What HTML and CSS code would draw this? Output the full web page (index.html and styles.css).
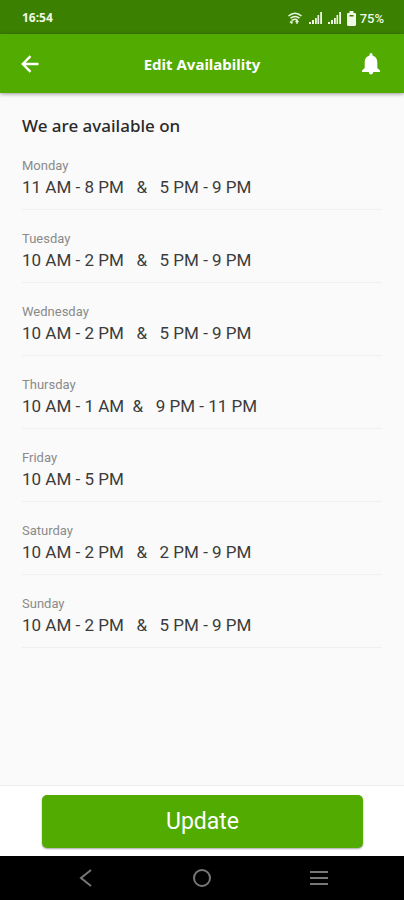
FILE: index.html
```
<!DOCTYPE html>
<html lang="en">
<head>
<meta charset="utf-8">
<meta name="viewport" content="width=device-width, initial-scale=1">
<title>Edit Availability</title>
<link rel="stylesheet" href="styles.css">
</head>
<body>
<div class="status">
  <span class="clock">16:54</span>
  <div class="indicators">
    <svg class="wifi" width="14" height="13" viewBox="0 0 14 13" fill="none" stroke="currentColor" stroke-width="1.500">
      <path d="M.5 4Q7-1.500 13.500 4M2.500 6.200Q7 2.800 11.500 6.200M4.500 8.300Q7 6.300 9.500 8.300"/>
      <path d="M4 7.500v4M2 9.500L4 11.500M9 12V8.500M7.500 10L9 8.500L10.500 10" stroke-width="1.200"/>
    </svg>
    <svg width="13" height="13" viewBox="0 0 13 13" fill="currentColor"><path d="M0 10h2v2H0zM3 8h2v4H3zM6 6h1.800v6H6zM8.500 3h1.600v9H8.500zM11.200 0h1.800v12h-1.800z"/></svg>
    <svg width="13" height="13" viewBox="0 0 13 13" fill="currentColor"><path d="M0 10h2v2H0zM3 8h2v4H3zM6 6h1.800v6H6zM8.500 3h1.600v9H8.500zM11.200 0h1.800v12h-1.800z"/></svg>
    <svg width="9" height="15" viewBox="0 0 9 15"><path fill="currentColor" d="M2.500 0h4v2H8q1 0 1 1v10.500q0 1.500-1.500 1.500h-6Q0 15 0 13.500V3q0-1 1-1h1.500z"/><path fill="#3b8000" d="M2.500 4h4v1.500h-4z"/></svg>
    <span class="percent">75%</span>
  </div>
</div>
<header class="appbar">
  <button class="icon-button" type="button" aria-label="Back">
    <svg width="18" height="18" viewBox="0 0 18 18" fill="none" stroke="currentColor" stroke-width="2.400"><path d="M17.500 9H2M9.500 1.200L1.800 9l7.700 7.800"/></svg>
  </button>
  <h1>Edit Availability</h1>
  <button class="icon-button" type="button" aria-label="Notifications">
    <svg width="18" height="22" viewBox="0 0 18 22" fill="currentColor"><path d="M9 0Q10.500 0 10.500 1.500V2.500C13.500 3.300 15.300 5.800 15.300 9v6l2.700 2.500V19H0v-1.500L2.700 15V9C2.700 5.800 4.500 3.300 7.500 2.500V1.500Q7.500 0 9 0zM6.700 19h4.600Q10.800 21.500 9 21.500T6.700 19z"/></svg>
  </button>
</header>
<main>
  <h2>We are available on</h2>
  <dl>
    <div class="day"><dt>Monday</dt><dd>11 AM - 8 PM   &amp;   5 PM - 9 PM</dd></div>
    <div class="day"><dt>Tuesday</dt><dd>10 AM - 2 PM   &amp;   5 PM - 9 PM</dd></div>
    <div class="day"><dt>Wednesday</dt><dd>10 AM - 2 PM   &amp;   5 PM - 9 PM</dd></div>
    <div class="day"><dt>Thursday</dt><dd>10 AM - 1 AM  &amp;   9 PM - 11 PM</dd></div>
    <div class="day"><dt>Friday</dt><dd>10 AM - 5 PM</dd></div>
    <div class="day"><dt>Saturday</dt><dd>10 AM - 2 PM   &amp;   2 PM - 9 PM</dd></div>
    <div class="day"><dt>Sunday</dt><dd>10 AM - 2 PM   &amp;   5 PM - 9 PM</dd></div>
  </dl>
</main>
<footer class="actions"><button class="update" type="button">Update</button></footer>
<nav class="system">
  <button type="button" aria-label="System back"><svg width="20" height="20" viewBox="0 0 20 20"><path d="M15 2L5 10l10 8"/></svg></button>
  <button type="button" aria-label="Home"><svg width="20" height="20" viewBox="0 0 20 20"><circle cx="10" cy="10" r="8"/></svg></button>
  <button type="button" aria-label="Recent apps"><svg width="20" height="20" viewBox="0 0 20 20"><path d="M1 4h18M1 10h18M1 16h18"/></svg></button>
</nav>
</body>
</html>
```
FILE: styles.css
```
* { box-sizing: border-box; }
body {
  margin: 0;
  min-height: 100vh;
  display: flex;
  flex-direction: column;
  background: #fafafa;
  color: #3c3c3c;
  font-family: Roboto, sans-serif;
}
button {
  border: 0;
  padding: 0;
  background: none;
  color: inherit;
  font: inherit;
}
svg { display: block; }
h1, h2, dl, dd { margin: 0; }
.status {
  height: 34px;
  padding: 2px 20px 0 22px;
  display: flex;
  align-items: center;
  justify-content: space-between;
  background: #3b8000;
  color: #eef8e4;
}
.clock {
  font: 700 12px/16px "Noto Sans", sans-serif;
}
.indicators {
  display: flex;
  align-items: center;
  gap: 6px;
}
.wifi {
  margin-right: 1px;
}
.percent {
  margin-left: -2px;
  font-size: 13px;
  font-weight: 500;
}
.appbar {
  height: 59px;
  padding: 0 21px;
  display: flex;
  align-items: center;
  justify-content: space-between;
  background: #51ab00;
  color: #fff;
  box-shadow: 0 1px 4px rgba(0, 0, 0, .4);
}
.icon-button {
  width: 21px;
}
.appbar h1 {
  font: 700 15px/24px "Noto Sans", sans-serif;
}
main {
  flex: 1;
  padding: 21px 22px;
}
h2 {
  font: 500 17px/23px "Noto Sans", sans-serif;
  color: #2a2a2a;
}
.day {
  height: 73px;
  padding-top: 21px;
  border-bottom: 1px solid #f0f0f0;
}
dt {
  font-size: 13px;
  line-height: 16px;
  color: #8a8a8a;
}
dd {
  margin-top: 1px;
  font-size: 17px;
  line-height: 24px;
  white-space: pre;
}
.actions {
  padding: 9px 41px 8px 42px;
  border-top: 1px solid #eee;
  background: #fff;
}
.update {
  display: block;
  width: 100%;
  height: 53px;
  border-radius: 5px;
  background: #51ab00;
  box-shadow: 0 1px 2px rgba(0, 0, 0, .35);
  color: #fff;
  font-size: 23px;
}
.system {
  height: 44px;
  padding: 0 27px 0 28px;
  display: flex;
  align-items: center;
  background: #000;
}
.system button {
  flex: 1;
  display: flex;
  justify-content: center;
}
.system svg {
  fill: none;
  stroke: #777;
  stroke-width: 2;
}
```
